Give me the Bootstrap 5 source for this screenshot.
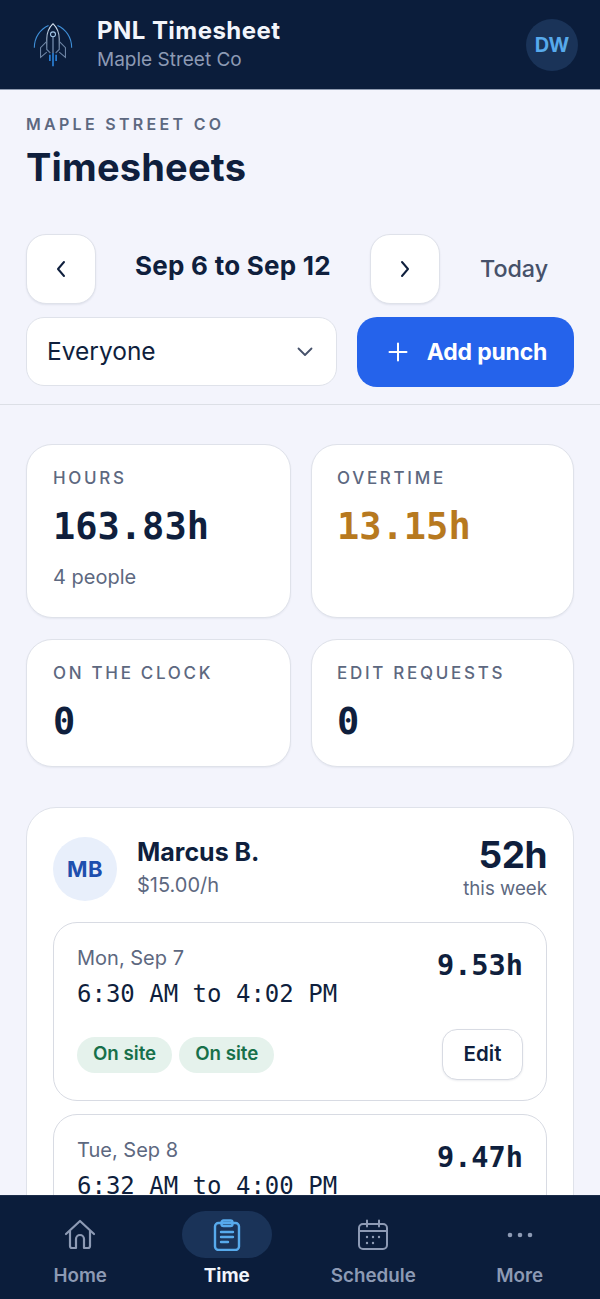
<!DOCTYPE html>
<html lang="en">
<head>
    <meta charset="UTF-8">
    <meta name="viewport" content="width=device-width, initial-scale=1.0">
    <title>PNL Timesheet</title>
    <link href="https://cdn.jsdelivr.net/npm/bootstrap@5.3.0/dist/css/bootstrap.min.css" rel="stylesheet">
    <style>
        body {
            background: #f3f4fc;
            color: #0f1f3d;
            font-family: Inter, "Liberation Sans", sans-serif;
        }
        .app-shell { height: 1299px; }
        .app-top {
            height: 90px;
            background: #0b1d3b;
            border-bottom: 1px solid #8f9bb0;
            padding: 0 22px 0 26px;
        }
        .logo-box { width: 71px; padding-left: 3px; }
        .app-name { font-size: 24px; font-weight: 700; color: #f2f5fb; line-height: 30px; letter-spacing: .45px; }
        .app-org { font-size: 19px; color: #8d9ab4; line-height: 26px; margin-top: 1px; }
        .me-chip {
            width: 52px; height: 52px;
            background: #1a3358;
            color: #57aaec;
            font-size: 20px;
            font-weight: 700;
        }
        .scroller { min-height: 0; }
        .page-head { padding: 22px 26px 0; height: 144px; }
        .eyebrow { font-size: 16px; font-weight: 600; letter-spacing: 3.3px; color: #5d6880; line-height: 24px; }
        .page-title { font-size: 38px; font-weight: 700; line-height: 46px; margin: 8px 0 0; letter-spacing: .2px; }
        .week-row { padding: 0 26px; height: 70px; }
        .square-btn {
            width: 70px; height: 70px;
            border: 1px solid #dfe2ea;
            border-radius: 20px;
            background: #fff;
            box-shadow: 0 1px 2px rgba(15,31,61,.08);
        }
        .week-label { width: 274px; text-align: center; font-size: 26px; font-weight: 700; letter-spacing: .25px; margin-top: -8px; }
        .today-link { font-size: 23.3px; font-weight: 500; color: #46516a; margin-left: 40px; }
        .filter-row { padding: 13px 26px 17px; gap: 20px; border-bottom: 1px solid #dcdfe6; }
        .who-select {
            width: 311px; height: 69px;
            border: 1px solid #dfe2ea;
            border-radius: 18px;
            background: #fff;
            padding: 0 23px 0 20px;
            font-size: 24.5px;
        }
        .add-btn {
            width: 217px; height: 70px;
            padding-left: 4px;
            background: #2563eb;
            border-radius: 20px;
            color: #fff;
            font-size: 23px;
            font-weight: 700;
            gap: 19px;
            letter-spacing: -.2px;
        }
        .stat-grid { padding: 39px 26px 0; display: grid; grid-template-columns: 265px 263px; gap: 21px 20px; }
        .stat-box {
            background: #fff;
            border: 1px solid #dfe2ea;
            border-radius: 26px;
            padding: 21px 26px;
            box-shadow: 0 1px 2px rgba(15,31,61,.06);
        }
        .stat-box:nth-child(even) { padding-left: 25px; }
        .stat-box.tall { height: 174px; }
        .stat-box.short { height: 128px; }
        .stat-cap { font-size: 17px; font-weight: 500; letter-spacing: 2.7px; color: #5d6880; line-height: 24px; }
        .stat-num { font-family: "DejaVu Sans Mono", "Liberation Mono", monospace; font-size: 37px; font-weight: 700; line-height: 46px; margin-top: 14px; }
        .stat-num.warn { color: #b7791f; }
        .stat-note { font-size: 20px; color: #5d6880; line-height: 28px; margin-top: 13px; }
        .person-card {
            margin: 40px 26px 0;
            background: #fff;
            border: 1px solid #dfe2ea;
            border-radius: 30px;
            padding: 26px 26px;
        }
        .person-chip {
            width: 64px; height: 64px;
            margin-top: 3px;
            background: #e8effb;
            color: #1e4fae;
            font-size: 22px;
            font-weight: 700;
            letter-spacing: .5px;
        }
        .person-name { font-size: 25px; font-weight: 700; line-height: 30px; }
        .person-rate { font-size: 20px; color: #5d6880; line-height: 28px; margin-top: 4px; }
        .week-hours { font-size: 37px; font-weight: 700; line-height: 42px; letter-spacing: -.5px; }
        .week-cap { font-size: 18.7px; color: #5d6880; line-height: 24px; margin-top: 1px; }
        .punch-box {
            border: 1px solid #d8dbe3;
            border-radius: 24px;
            padding: 21px 23px 19px;
            height: 179px;
            margin-top: 13px;
        }
        .punch-box.first { margin-top: 21px; }
        .punch-day { font-size: 20px; color: #5d6880; line-height: 28px; }
        .punch-span { font-family: "DejaVu Sans Mono", "Liberation Mono", monospace; font-size: 24px; font-weight: 500; line-height: 30px; margin-top: 7px; }
        .punch-total { font-family: "DejaVu Sans Mono", "Liberation Mono", monospace; font-size: 28.6px; font-weight: 700; line-height: 36px; margin-top: 3px; }
        .punch-foot { margin-top: 20px; }
        .tag-chip {
            height: 36px; padding: 0 16px;
            background: #e5f2ec;
            color: #17704a;
            border-radius: 18px;
            font-size: 18.7px;
            font-weight: 600;
        }
        .tag-row { gap: 7px; }
        .edit-btn {
            width: 81px; height: 51px;
            border: 1px solid #d8dbe3;
            border-radius: 15px;
            background: #fff;
            color: #0f1f3d;
            font-size: 20.5px;
            font-weight: 600;
            box-shadow: 0 1px 2px rgba(15,31,61,.08);
        }
        .tab-bar {
            height: 104px;
            background: #0b1d3b;
            border-top: 1px solid #1b2c49;
        }
        .tab-item { width: 146.5px; color: #8d9ab4; font-size: 18.8px; font-weight: 600; line-height: 26px; }
        .tab-item.on { color: #f2f5fb; font-weight: 700; }
        .tab-icon { width: 90px; height: 47px; border-radius: 24px; margin: 15px 0 5px; }
        .on .tab-icon { background: #1a3358; }
    </style>
</head>
<body>
<div class="app-shell d-flex flex-column overflow-hidden">
    <header class="app-top d-flex align-items-center flex-shrink-0">
        <div class="logo-box">
            <svg width="48" height="48" viewBox="0 0 54 54" fill="none">
                <defs>
                    <linearGradient id="rk" x1="0" y1="0" x2="0" y2="1">
                        <stop offset="0" stop-color="#dbe7f4"/>
                        <stop offset="1" stop-color="#5d7699"/>
                    </linearGradient>
                </defs>
                <!-- body and fins -->
                <path d="M27 3C22 8 20 13 20 20v12l4 4M27 3c5 5 7 10 7 17v12l-4 4" stroke="url(#rk)" stroke-width="1.3"/>
                <path d="M20 23l-7 7v11l7-6M34 23l7 7v11l-7-6" stroke="#6f86a6" stroke-width="1.2"/>
                <!-- outer arcs -->
                <path d="M6 30C6 18 13 9 22 5M48 30C48 18 41 9 32 5" stroke="#3f8fd8" stroke-width="1.2"/>
                <circle cx="27" cy="15" r="2.8" stroke="#a9cbec" stroke-width="1.2"/>
                <path d="M27 18v18" stroke="#8aa4c6" stroke-width="1.2"/>
                <!-- flame -->
                <path d="M27 36v15M23.5 38v7M30.5 38v7" stroke="#2f8ae6" stroke-width="1.7"/>
            </svg>
        </div>
        <div class="flex-grow-1">
            <div class="app-name">PNL Timesheet</div>
            <div class="app-org">Maple Street Co</div>
        </div>
        <div class="me-chip rounded-circle d-flex align-items-center justify-content-center">DW</div>
    </header>

    <main class="scroller flex-grow-1 overflow-hidden">
        <div class="page-head">
            <div class="eyebrow">MAPLE STREET CO</div>
            <h1 class="page-title">Timesheets</h1>
        </div>
        <div class="week-row d-flex align-items-center">
            <button class="square-btn d-flex align-items-center justify-content-center p-0" type="button" aria-label="Previous week">
                <svg width="14" height="18" viewBox="0 0 14 18" fill="none" stroke="#0f1f3d" stroke-width="2" stroke-linecap="round" stroke-linejoin="round"><path d="M10 2L4 9l6 7"/></svg>
            </button>
            <div class="week-label">Sep 6 to Sep 12</div>
            <button class="square-btn d-flex align-items-center justify-content-center p-0" type="button" aria-label="Next week">
                <svg width="14" height="18" viewBox="0 0 14 18" fill="none" stroke="#0f1f3d" stroke-width="2" stroke-linecap="round" stroke-linejoin="round"><path d="M4 2l6 7-6 7"/></svg>
            </button>
            <div class="today-link">Today</div>
        </div>
        <div class="filter-row d-flex">
            <div class="who-select d-flex align-items-center justify-content-between">
                <span>Everyone</span>
                <svg width="16" height="10" viewBox="0 0 16 10" fill="none" stroke="#46516a" stroke-width="1.8" stroke-linecap="round" stroke-linejoin="round"><path d="M1.5 1.5L8 8l6.500-6.500"/></svg>
            </div>
            <div class="add-btn d-flex align-items-center justify-content-center">
                <svg width="20" height="20" viewBox="0 0 20 20" fill="none" stroke="#fff" stroke-width="2" stroke-linecap="round"><path d="M10 1.500v17M1.500 10h17"/></svg>
                <span>Add punch</span>
            </div>
        </div>

        <div class="stat-grid">
            <div class="stat-box tall">
                <div class="stat-cap">HOURS</div>
                <div class="stat-num">163.83h</div>
                <div class="stat-note">4 people</div>
            </div>
            <div class="stat-box tall">
                <div class="stat-cap">OVERTIME</div>
                <div class="stat-num warn">13.15h</div>
            </div>
            <div class="stat-box short">
                <div class="stat-cap">ON THE CLOCK</div>
                <div class="stat-num">0</div>
            </div>
            <div class="stat-box short">
                <div class="stat-cap">EDIT REQUESTS</div>
                <div class="stat-num">0</div>
            </div>
        </div>

        <section class="person-card">
            <div class="d-flex align-items-center">
                <div class="person-chip rounded-circle d-flex align-items-center justify-content-center flex-shrink-0">MB</div>
                <div class="flex-grow-1 ms-3 ps-1">
                    <div class="person-name">Marcus B.</div>
                    <div class="person-rate">$15.00/h</div>
                </div>
                <div class="text-end">
                    <div class="week-hours">52h</div>
                    <div class="week-cap">this week</div>
                </div>
            </div>

            <div class="punch-box first">
                <div class="d-flex justify-content-between">
                    <div>
                        <div class="punch-day">Mon, Sep 7</div>
                        <div class="punch-span">6:30 AM to 4:02 PM</div>
                    </div>
                    <div class="punch-total">9.53h</div>
                </div>
                <div class="punch-foot d-flex align-items-center justify-content-between">
                    <div class="tag-row d-flex">
                        <span class="tag-chip d-flex align-items-center">On site</span>
                        <span class="tag-chip d-flex align-items-center">On site</span>
                    </div>
                    <button class="edit-btn p-0" type="button">Edit</button>
                </div>
            </div>

            <div class="punch-box">
                <div class="d-flex justify-content-between">
                    <div>
                        <div class="punch-day">Tue, Sep 8</div>
                        <div class="punch-span">6:32 AM to 4:00 PM</div>
                    </div>
                    <div class="punch-total">9.47h</div>
                </div>
            </div>
        </section>
    </main>

    <nav class="tab-bar d-flex justify-content-center flex-shrink-0">
        <div class="tab-item d-flex flex-column align-items-center">
            <div class="tab-icon d-flex align-items-center justify-content-center">
                <svg width="32" height="32" viewBox="0 0 32 32" fill="none" stroke="#8d9ab4" stroke-width="2.2" stroke-linecap="round" stroke-linejoin="round"><path d="M2 15L16 2l14 13"/><path d="M6 12v15a2 2 0 0 0 2 2h4V20a4 4 0 0 1 8 0v9h4a2 2 0 0 0 2-2V12"/></svg>
            </div>
            <span>Home</span>
        </div>
        <div class="tab-item on d-flex flex-column align-items-center">
            <div class="tab-icon d-flex align-items-center justify-content-center">
                <svg width="28" height="32" viewBox="0 0 28 32" fill="none" stroke="#57aaec" stroke-width="2.4" stroke-linecap="round" stroke-linejoin="round"><rect x="2" y="4" width="24" height="27" rx="3.5"/><rect x="8.5" y="1.5" width="11" height="5.5" rx="2"/><path d="M8 13h12M8 18h12M8 23h7"/></svg>
            </div>
            <span>Time</span>
        </div>
        <div class="tab-item d-flex flex-column align-items-center">
            <div class="tab-icon d-flex align-items-center justify-content-center">
                <svg width="32" height="32" viewBox="0 0 32 32" fill="none" stroke="#8d9ab4" stroke-width="2" stroke-linecap="round"><rect x="2" y="5" width="28" height="25" rx="4"/><path d="M2 12h28M10 1.5v6M22 1.5v6"/><path stroke-width="2.4" d="M10 18h.01M16 18h.01M22 18h.01M10 24h.01M16 24h.01"/></svg>
            </div>
            <span>Schedule</span>
        </div>
        <div class="tab-item d-flex flex-column align-items-center">
            <div class="tab-icon d-flex align-items-center justify-content-center">
                <svg width="28" height="6" viewBox="0 0 28 6" fill="#8d9ab4"><circle cx="4" cy="3" r="2.3"/><circle cx="14" cy="3" r="2.3"/><circle cx="24" cy="3" r="2.3"/></svg>
            </div>
            <span>More</span>
        </div>
    </nav>
</div>
<script src="https://cdn.jsdelivr.net/npm/bootstrap@5.3.0/dist/js/bootstrap.bundle.min.js"></script>
</body>
</html>
